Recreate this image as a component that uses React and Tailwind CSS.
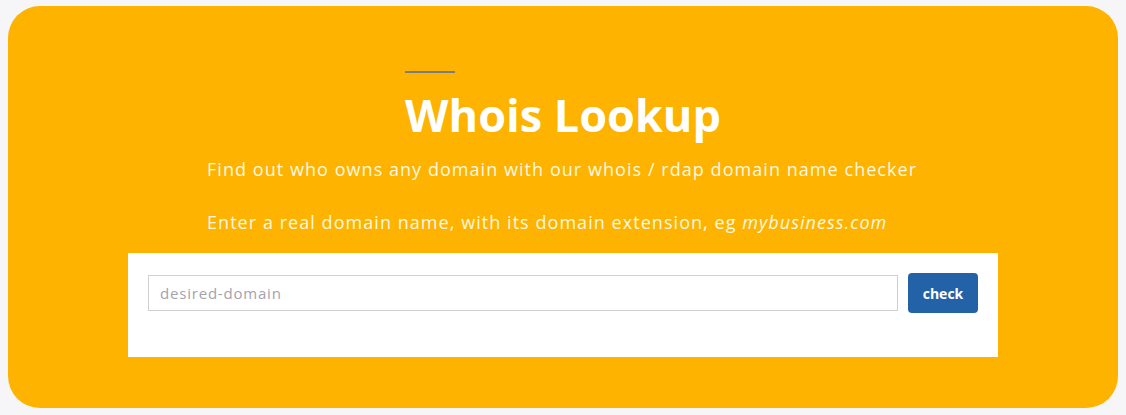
export default function App() {
  return (
    <div className="min-h-[415px] w-full bg-[#f6f6f8] px-[8px] pt-[6px] pb-[7px]">
      <section className="flex h-[402px] flex-col items-center rounded-[32px] bg-[#fdb300] pt-[65px]">
        {/* heading with short rule above its left edge */}
        <div className="flex flex-col items-start">
          <span className="block h-[2px] w-[50px] bg-[#7c7c7c]" />
          <h1
            className="mt-[14px] text-[45px] font-bold leading-[56px] text-white"
            style={{ fontFamily: '"Open Sans", sans-serif' }}
          >
            Whois Lookup
          </h1>
        </div>
        <div
          className="mt-[13px] w-[712px] text-[18px] leading-[26px] tracking-[1.05px] text-[#fff8e0]"
          style={{ fontFamily: '"Open Sans", sans-serif' }}
        >
          <p>Find out who owns any domain with our whois / rdap domain name checker</p>
          <p className="mt-[27px]">
            Enter a real domain name, with its domain extension, eg <em>mybusiness.com</em>
          </p>
        </div>
        <form
          className="mt-[18px] flex h-[104px] w-[870px] items-start gap-[10px] bg-white px-[20px] pt-[20px]"
          onSubmit={(e) => e.preventDefault()}
        >
          <input
            type="text"
            placeholder="desired-domain"
            className="mt-[2px] h-[36px] flex-1 border border-[#cfcfd4] px-[11px] text-[15px] tracking-[0.8px] text-[#333] outline-none placeholder:text-[#a3a3ad]"
            style={{ fontFamily: '"Open Sans", sans-serif' }}
          />
          <button
            type="submit"
            className="h-[40px] w-[70px] rounded-[4px] bg-[#2462a8] text-[14px] font-bold text-white"
            style={{ fontFamily: '"Open Sans", sans-serif' }}
          >
            check
          </button>
        </form>
      </section>
    </div>
  );
}
